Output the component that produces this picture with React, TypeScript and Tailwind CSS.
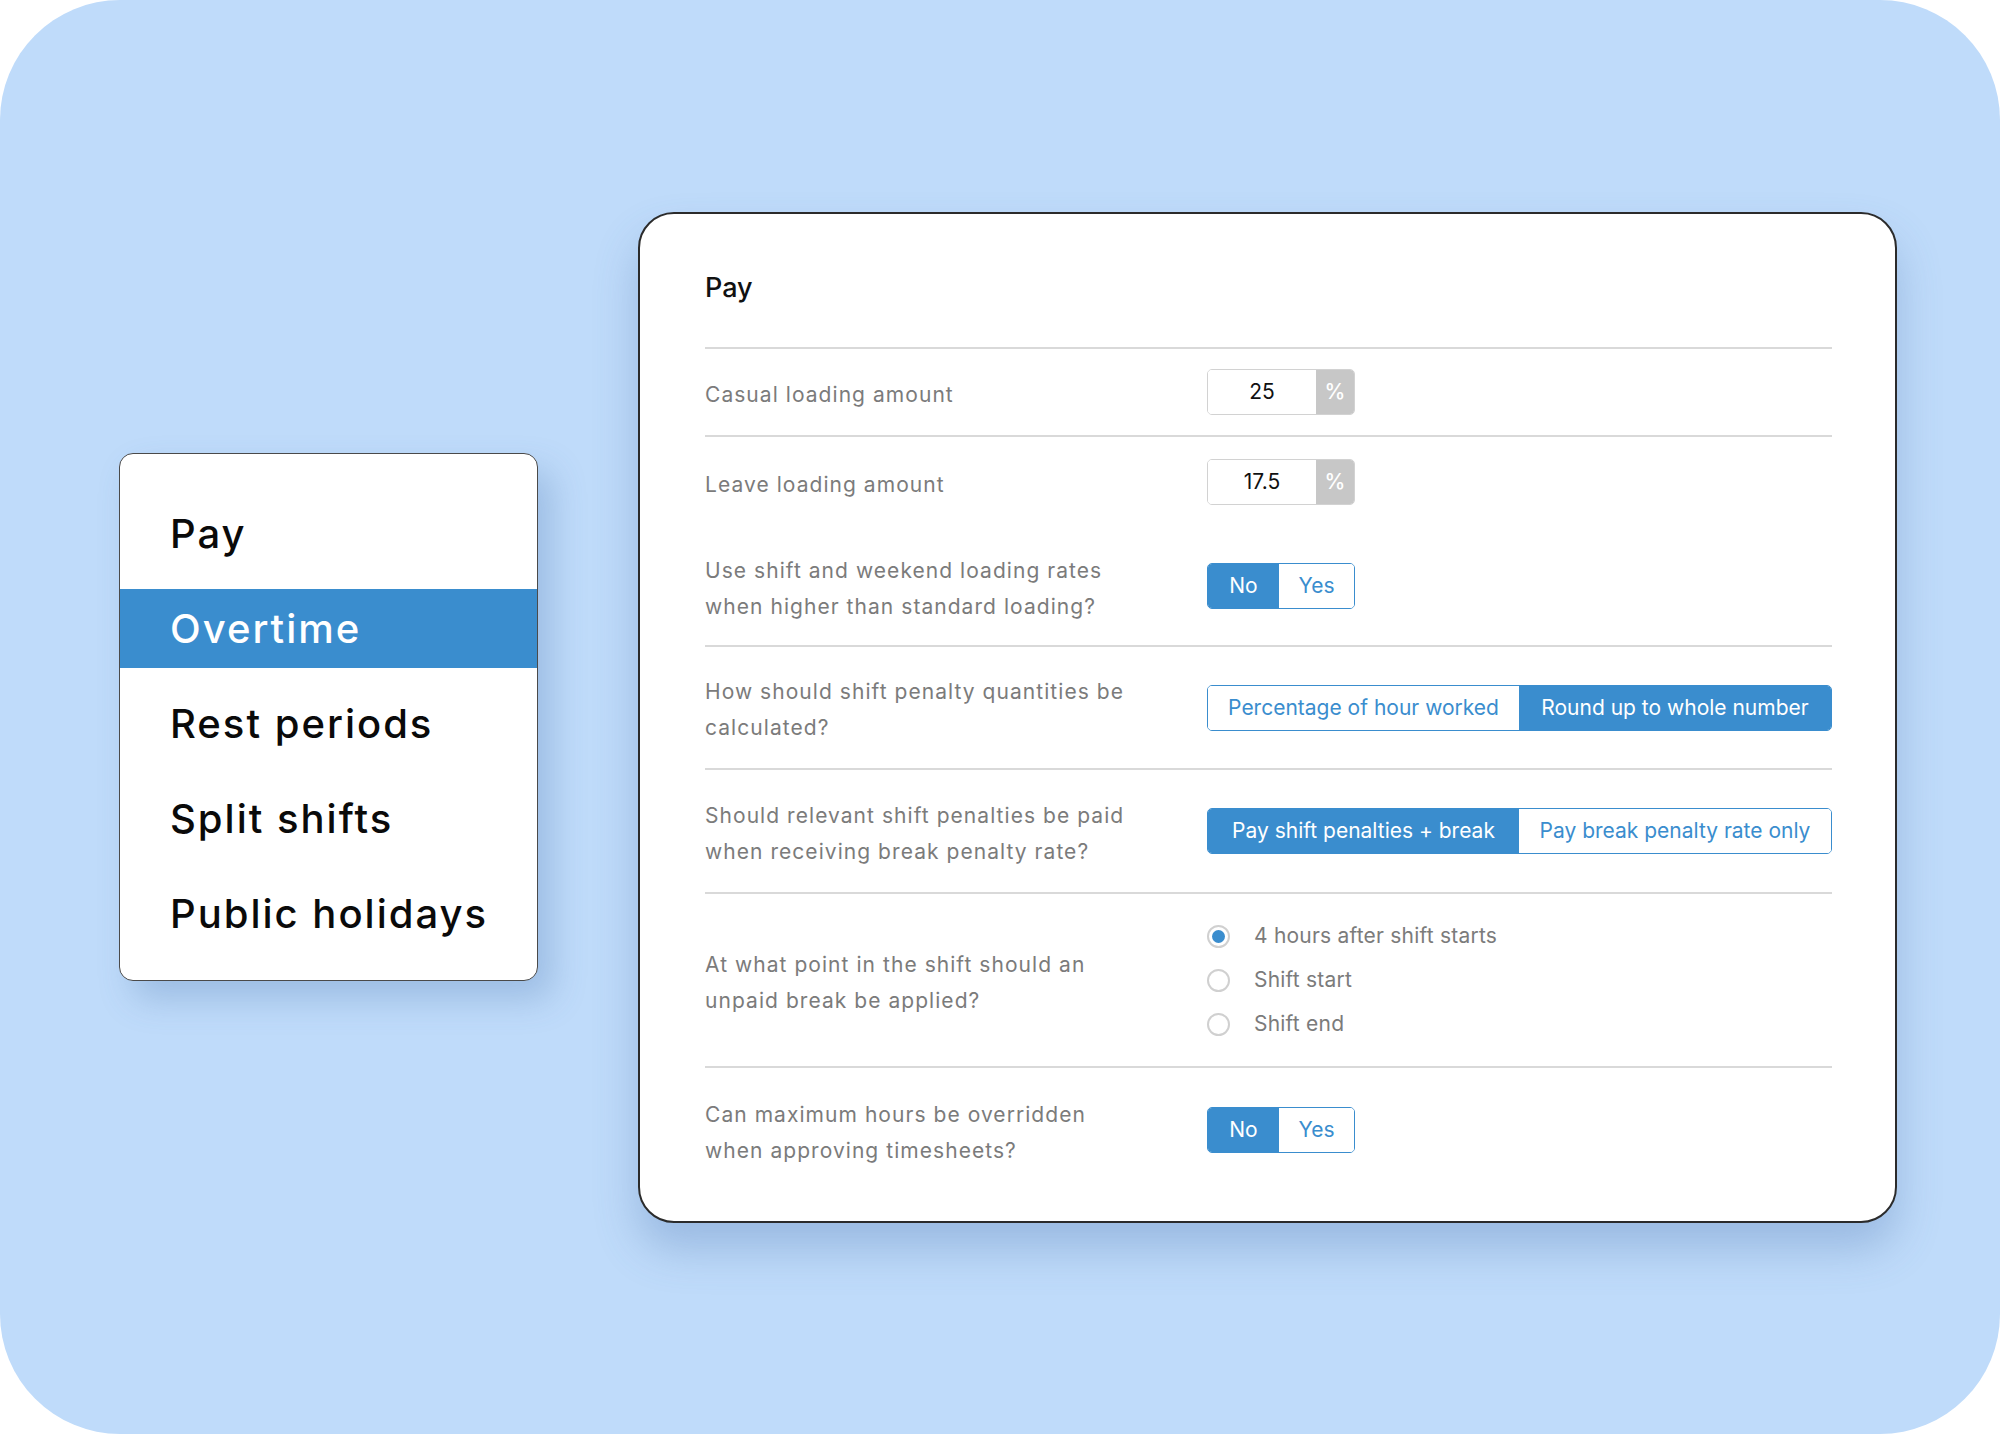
import React from "react";

const font = { fontFamily: "Inter, 'Noto Sans', 'Liberation Sans', sans-serif" };

function Divider() {
  return <div className="h-[2px] w-full bg-[#d9d9d9]" />;
}

function Label({ lines }: { lines: string[] }) {
  return (
    <div className="w-[502px] shrink-0 pt-[5px] text-[21px] leading-[36px] tracking-[0.05em] text-[#7b7b7b]">
      {lines.map((l, i) => (
        <div key={i}>{l}</div>
      ))}
    </div>
  );
}

function PercentInput({ value }: { value: string }) {
  return (
    <div className="flex h-[46px] w-[148px] overflow-hidden rounded-[5px] border border-[#d2d2d2]">
      <div className="flex w-[108px] items-center justify-center bg-white text-[21px] text-[#111]">{value}</div>
      <div className="flex flex-1 items-center justify-center bg-[#c7c7c7] text-[21px] font-medium text-white">%</div>
    </div>
  );
}

function Segmented({ options, selected, widths }: { options: string[]; selected: number; widths: string[] }) {
  return (
    <div className="flex h-[46px] overflow-hidden rounded-[5px] border border-[#3a8dce]">
      {options.map((o, i) => (
        <div
          key={o}
          className={
            "flex items-center justify-center text-[21px] " +
            widths[i] +
            " " +
            (i === selected ? "bg-[#3a8dce] text-white" : "bg-white text-[#3a8dce]")
          }
        >
          {o}
        </div>
      ))}
    </div>
  );
}

function Radio({ checked, label }: { checked?: boolean; label: string }) {
  return (
    <div className="flex h-[44px] items-center">
      <div className="flex h-[23px] w-[23px] items-center justify-center rounded-full border-2 border-[#d0d0d0] bg-white">
        {checked && <div className="h-[13px] w-[13px] rounded-full bg-[#3a8dce]" />}
      </div>
      <div className="ml-[24px] text-[21px] tracking-[0.01em] text-[#7b7b7b]">{label}</div>
    </div>
  );
}

export default function App() {
  const menu = ["Pay", "Overtime", "Rest periods", "Split shifts", "Public holidays"];
  return (
    <div className="h-[1434px] w-[2000px] bg-white" style={font}>
      <div className="flex h-[1434px] w-[2000px] items-start rounded-[120px] bg-[#bfdbfa] pl-[119px] pt-[212px]">
        {/* Left menu */}
        <div className="mt-[241px] flex w-[419px] shrink-0 flex-col gap-[16px] rounded-[14px] border border-[#4a4a4a] bg-white pb-[27px] pt-[40px] shadow-[14px_18px_34px_rgba(70,110,170,0.28)]">
          {menu.map((m) => (
            <div
              key={m}
              className={
                "flex h-[79px] items-center pl-[50px] text-[40px] font-medium tracking-[0.05em] " +
                (m === "Overtime" ? "bg-[#3a8dce] text-white" : "text-[#0a0a0a]")
              }
            >
              {m}
            </div>
          ))}
        </div>

        {/* Main panel */}
        <div className="ml-[100px] flex h-[1011px] w-[1259px] shrink-0 flex-col rounded-[36px] border-2 border-[#2b2b2b] bg-white pl-[65px] pr-[63px] shadow-[0_26px_44px_rgba(70,110,170,0.3)]">
          <div className="h-[133px] pt-[57px] text-[27px] font-medium leading-[34px] text-[#111]">Pay</div>
          <Divider />
          <div className="flex h-[86px] items-center">
            <Label lines={["Casual loading amount"]} />
            <PercentInput value="25" />
          </div>
          <Divider />
          <div className="flex h-[90px] items-center">
            <Label lines={["Leave loading amount"]} />
            <PercentInput value="17.5" />
          </div>
          <div className="flex h-[118px] items-center">
            <Label lines={["Use shift and weekend loading rates", "when higher than standard loading?"]} />
            <Segmented options={["No", "Yes"]} selected={0} widths={["w-[71px]", "w-[75px]"]} />
          </div>
          <Divider />
          <div className="flex h-[121px] items-center">
            <Label lines={["How should shift penalty quantities be", "calculated?"]} />
            <Segmented
              options={["Percentage of hour worked", "Round up to whole number"]}
              selected={1}
              widths={["w-[311px]", "w-[312px]"]}
            />
          </div>
          <Divider />
          <div className="flex h-[122px] items-center">
            <Label lines={["Should relevant shift penalties be paid", "when receiving break penalty rate?"]} />
            <Segmented
              options={["Pay shift penalties + break", "Pay break penalty rate only"]}
              selected={0}
              widths={["w-[311px]", "w-[312px]"]}
            />
          </div>
          <Divider />
          <div className="flex h-[172px] items-center">
            <Label lines={["At what point in the shift should an", "unpaid break be applied?"]} />
            <div className="flex flex-col">
              <Radio checked label="4 hours after shift starts" />
              <Radio label="Shift start" />
              <Radio label="Shift end" />
            </div>
          </div>
          <Divider />
          <div className="flex h-[124px] items-center">
            <Label lines={["Can maximum hours be overridden", "when approving timesheets?"]} />
            <Segmented options={["No", "Yes"]} selected={0} widths={["w-[71px]", "w-[75px]"]} />
          </div>
        </div>
      </div>
    </div>
  );
}
